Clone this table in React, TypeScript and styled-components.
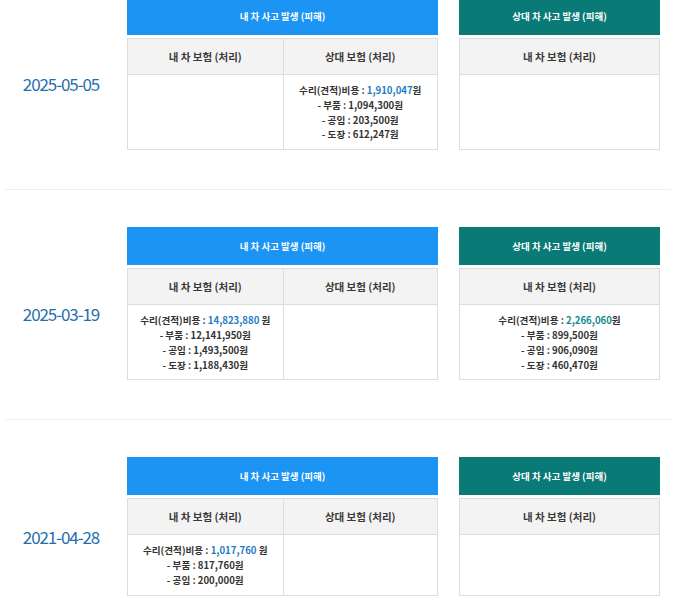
import React from "react";
import styled, { createGlobalStyle } from "styled-components";

const Global = createGlobalStyle`
  html, body { margin: 0; padding: 0; background: #fff; }
  body { font-family: "Noto Sans CJK KR", "Noto Sans", sans-serif; color: #333; }
`;

const List = styled.div`
  width: 666px;
  margin: -40px 0 0 5px;
`;

const Row = styled.section`
  display: flex;
  align-items: stretch;
  padding: 37px 0 39px;
  border-bottom: 1px solid #eeeeee;
`;

const DateCol = styled.div`
  width: 112px;
  display: flex;
  align-items: center;
  justify-content: center;
  padding-top: 20px;
  font-size: 17px;
  color: #1f6fae;
  letter-spacing: -1.1px;
`;

const Box = styled.div<{ $w: number; $ml: number }>`
  width: ${(p) => p.$w}px;
  margin-left: ${(p) => p.$ml}px;
  display: flex;
  flex-direction: column;
`;

const BoxHead = styled.div<{ $bg: string }>`
  height: 38px;
  background: ${(p) => p.$bg};
  color: #fff;
  font-size: 9.5px;
  font-weight: 700;
  display: flex;
  align-items: center;
  justify-content: center;
`;

const Table = styled.div<{ $cols: number }>`
  flex: 1;
  margin-top: 3px;
  border: 1px solid #dddddd;
  display: grid;
  grid-template-columns: repeat(${(p) => p.$cols}, 1fr);
  grid-template-rows: 36px 1fr;
`;

const HeadCell = styled.div`
  background: #f3f3f3;
  border-bottom: 1px solid #dddddd;
  font-size: 10.5px;
  font-weight: 700;
  color: #3a3a3a;
  display: flex;
  align-items: center;
  justify-content: center;
  & + & { border-left: 1px solid #dddddd; }
`;

const BodyCell = styled.div<{ $divider?: boolean }>`
  padding: 8px 0 7px;
  font-size: 9.6px;
  font-weight: 700;
  line-height: 14.8px;
  text-align: center;
  color: #333;
  ${(p) => (p.$divider ? "border-left: 1px solid #dddddd;" : "")}
`;

const Line = styled.div``;

const Amount = styled.span<{ $c: string }>`
  color: ${(p) => p.$c};
`;

type Cost = { total: string; space?: boolean; items: [string, string][] };

const CostText = ({ c, color }: { c: Cost; color: string }) => (
  <>
    <Line>
      수리(견적)비용 : <Amount $c={color}>{c.total}</Amount>
      {c.space ? " 원" : "원"}
    </Line>
    {c.items.map(([k, v]) => (
      <Line key={k}>
        - {k} : {v}원
      </Line>
    ))}
  </>
);

type Rec = { date: string; mine?: Cost; theirs?: Cost; other?: Cost };

const data: Rec[] = [
  {
    date: "2025-05-05",
    theirs: {
      total: "1,910,047",
      items: [
        ["부품", "1,094,300"],
        ["공임", "203,500"],
        ["도장", "612,247"],
      ],
    },
  },
  {
    date: "2025-03-19",
    mine: {
      total: "14,823,880",
      space: true,
      items: [
        ["부품", "12,141,950"],
        ["공임", "1,493,500"],
        ["도장", "1,188,430"],
      ],
    },
    other: {
      total: "2,266,060",
      items: [
        ["부품", "899,500"],
        ["공임", "906,090"],
        ["도장", "460,470"],
      ],
    },
  },
  {
    date: "2021-04-28",
    mine: {
      total: "1,017,760",
      space: true,
      items: [
        ["부품", "817,760"],
        ["공임", "200,000"],
      ],
    },
  },
];

const BLUE = "#1b94f3";
const TEAL = "#0a7a76";

export default function App() {
  return (
    <>
      <Global />
      <List>
        {data.map((r) => (
          <Row key={r.date}>
            <DateCol>{r.date}</DateCol>
            <Box $w={311} $ml={10}>
              <BoxHead $bg={BLUE}>내 차 사고 발생 (피해)</BoxHead>
              <Table $cols={2}>
                <HeadCell>내 차 보험 (처리)</HeadCell>
                <HeadCell>상대 보험 (처리)</HeadCell>
                <BodyCell>{r.mine && <CostText c={r.mine} color="#1f7cc4" />}</BodyCell>
                <BodyCell $divider>
                  {r.theirs && <CostText c={r.theirs} color="#1f7cc4" />}
                </BodyCell>
              </Table>
            </Box>
            <Box $w={201} $ml={21}>
              <BoxHead $bg={TEAL}>상대 차 사고 발생 (피해)</BoxHead>
              <Table $cols={1}>
                <HeadCell>내 차 보험 (처리)</HeadCell>
                <BodyCell>{r.other && <CostText c={r.other} color="#13898e" />}</BodyCell>
              </Table>
            </Box>
          </Row>
        ))}
      </List>
    </>
  );
}
